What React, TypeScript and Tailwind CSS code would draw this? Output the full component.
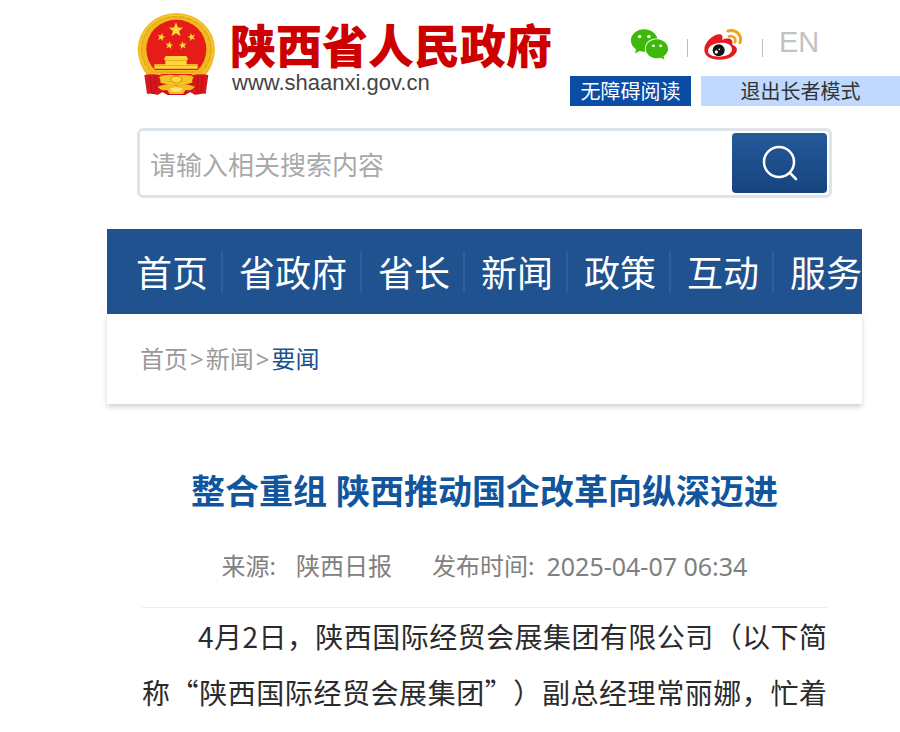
import { FaWeixin } from "react-icons/fa";

const navItems = ["首页", "省政府", "省长", "新闻", "政策", "互动", "服务"];

function Emblem() {
  const star = "M0,-10 L2.5,-3.2 L9.5,-3 L4,1.3 L6,8.2 L0,4.2 L-6,8.2 L-4,1.3 L-9.5,-3 L-2.5,-3.2 Z";
  return (
    <svg viewBox="20 22 237 252" className="h-[84px] w-[79px] shrink-0" aria-hidden="true">
      <path d="M48 200 L52 266 L82 270 L96 262 L112 271 L164 271 L180 262 L196 270 L223 266 L228 200 Z" fill="#c8141c" />
      <ellipse cx="138" cy="134" rx="116" ry="109" fill="#f0b91f" />
      <path d="M24 134 C24 175 40 210 70 226 H206 C236 210 252 175 252 134 Z" fill="#f0b91f" />
      <ellipse cx="138" cy="134" rx="104" ry="98" fill="none" stroke="#e0a018" strokeWidth="3" strokeDasharray="16 6" />
      <ellipse cx="138" cy="134" rx="110" ry="103" fill="none" stroke="#f9cf3c" strokeWidth="3" />
      <ellipse cx="138" cy="134" rx="90" ry="89" fill="#e51c18" />
      <g fill="#ffd83a">
        <path d={star} transform="translate(137 76) scale(2.3)" />
        <path d={star} transform="translate(93 97) rotate(15) scale(1.25)" />
        <path d={star} transform="translate(184 97) rotate(-15) scale(1.25)" />
        <path d={star} transform="translate(117 122) rotate(8) scale(1.25)" />
        <path d={star} transform="translate(157 122) rotate(-8) scale(1.25)" />
        <path d="M106 154 H168 L174 166 H169 V179 H202 V192 H72 V179 H105 V166 H100 Z" />
        <path d="M56 196 H219 V208 H56 Z" fill="#f7bd20" />
      </g>
      <path d="M105 167 H170 M72 183 H202 M58 202 H216" stroke="#dc8f12" strokeWidth="2" />
      <path d="M42 211 Q68 206 96 213 L88 235 L96 262 L82 270 L70 262 L50 268 Z" fill="#d6181d" />
      <path d="M234 211 Q208 206 180 213 L188 235 L180 262 L194 270 L206 262 L226 268 Z" fill="#d6181d" />
      <path d="M58 214 L64 260 M74 214 L76 262 M218 214 L212 260 M202 214 L200 262" stroke="#b01118" strokeWidth="3" fill="none" />
      <path d="M86 217 Q112 206 138 213 Q164 206 190 217 L180 236 Q160 226 138 230 Q116 226 96 236 Z" fill="#f7c324" />
      <path d="M120 222 Q138 206 156 222 Q150 236 138 236 Q126 236 120 222 Z" fill="#ffd83a" stroke="#dc8f12" strokeWidth="3" />
      <path d="M82 246 Q112 232 138 244 Q164 232 194 246 Q182 260 166 256 L158 268 H118 L110 256 Q94 260 82 246 Z" fill="#f6bb20" />
      <path d="M118 252 Q138 243 158 252 L150 261 H126 Z" fill="#ffe27a" />
    </svg>
  );
}

function WeiboIcon() {
  return (
    <svg viewBox="0 0 114 93" className="h-[31px] w-[38px]" aria-hidden="true">
      <path d="M1 62 C1 40 28 15 47 16 C57 17 57 26 54 33 C68 26 87 27 85 42 C84 46 84 46 88 49 C98 53 101 61 97 70 C88 86 67 92 46 92 C20 92 1 81 1 62 Z" fill="#e6191f" />
      <path d="M12 66 C12 51 30 42 50 41 C70 40 84 48 84 61 C84 75 67 83 46 83 C27 83 12 78 12 66 Z" fill="#fff" />
      <circle cx="44" cy="64" r="18" fill="#111" />
      <circle cx="37" cy="69" r="5" fill="#fff" />
      <circle cx="46" cy="61" r="2.5" fill="#fff" />
      <path d="M72 6 C96 -1 115 18 108 41" fill="none" stroke="#f6a21b" strokeWidth="9" strokeLinecap="round" />
      <path d="M75 22 C88 19 97 28 93 40" fill="none" stroke="#f6a21b" strokeWidth="8" strokeLinecap="round" />
    </svg>
  );
}

function Header() {
  return (
    <header className="flex justify-between pt-3 pl-[137px]">
      <a href="#" className="flex gap-3.5">
        <Emblem />
        <span className="flex flex-col pt-2">
          <span className="text-[46px] leading-[50px] font-black whitespace-nowrap text-[#cc0000]">
            陕西省人民政府
          </span>
          <span className="pt-px pl-0.5 font-['Liberation_Sans',sans-serif] text-[22px] leading-6 text-[#444]">
            www.shaanxi.gov.cn
          </span>
        </span>
      </a>
      <div className="flex w-[330px] shrink-0 flex-col justify-between">
        <div className="flex h-16 items-center gap-4 pl-[60px]">
          <a href="#" aria-label="微信">
            <FaWeixin className="size-[39px] text-[#3eb80b]" />
          </a>
          <span className="mt-2 ml-0.5 h-[18px] w-px bg-[#bbb]" />
          <a href="#" aria-label="微博">
            <WeiboIcon />
          </a>
          <span className="mt-2 ml-1 h-[18px] w-px bg-[#bbb]" />
          <a href="#" className="pb-1 font-['Liberation_Sans',sans-serif] text-[29px] leading-8 text-[#c2c2c2]">
            EN
          </a>
        </div>
        <div className="flex gap-2.5 text-xl leading-7">
          <button type="button" className="w-[121px] bg-[#0b4ca5] pt-0.5 text-white">
            无障碍阅读
          </button>
          <button type="button" className="grow bg-[#bfd9ff] pt-0.5 text-[#333]">
            退出长者模式
          </button>
        </div>
      </div>
    </header>
  );
}

function SearchBar() {
  return (
    <form
      className="mt-[22px] mr-[68px] ml-[137px] flex h-[70px] items-center rounded-md border-[3px] border-[#dde4ea] pr-0.5 pl-2.5"
      onSubmit={(e) => e.preventDefault()}
    >
      <input
        type="text"
        aria-label="搜索"
        placeholder="请输入相关搜索内容"
        className="h-full min-w-0 grow pt-1 text-[26px] outline-none placeholder:text-[#a9a9a9]"
      />
      <button
        type="submit"
        aria-label="搜索"
        className="flex h-[60px] w-[95px] shrink-0 items-center justify-center rounded bg-linear-to-b from-[#24599b] to-[#17447e]"
      >
        <svg viewBox="0 0 36 36" className="size-9" fill="none" stroke="#fff" strokeWidth="2.5" strokeLinecap="round">
          <circle cx="17" cy="17" r="15" />
          <path d="M28 28 L34 34" />
        </svg>
      </button>
    </form>
  );
}

export default function App() {
  return (
    <div
      lang="zh-CN"
      className="min-h-screen overflow-hidden bg-white font-['Noto_Sans','Noto_Sans_CJK_SC',sans-serif]"
    >
      <Header />
      <SearchBar />
      <div className="mt-[31px] mr-[38px] ml-[107px]">
        <nav className="overflow-hidden bg-[#20528f] pl-[13px]">
          <ul className="flex h-[85px] items-center">
            {navItems.map((item, i) => (
              <li
                key={item}
                className={`flex h-[42px] shrink-0 items-center pr-[13px] pl-4 ${i > 0 ? "border-l-2 border-[#2c5f9b]" : ""}`}
              >
                <a href="#" className="pt-1 text-4xl text-white">
                  {item}
                </a>
              </li>
            ))}
          </ul>
        </nav>
        <div className="flex h-[90px] items-center gap-0.5 px-[33px] text-2xl text-[#999] shadow-[0_3px_5px_rgba(0,0,0,0.18)]">
          <a href="#">首页</a>
          <span>&gt;</span>
          <a href="#">新闻</a>
          <span>&gt;</span>
          <a href="#" className="text-[#20528f]">
            要闻
          </a>
        </div>

        <article className="px-[35px] pt-[62px]">
          <h1 className="text-center text-[34px] leading-[50px] font-bold text-[#11559c]">
            整合重组 陕西推动国企改革向纵深迈进
          </h1>
          <div className="flex justify-center gap-10 border-b border-[#eee] pt-[30px] pb-[21px] text-2xl leading-10 text-[#808080]">
            <p className="flex gap-5">
              <span>来源:</span>
              <span>陕西日报</span>
            </p>
            <p className="flex gap-3">
              <span>发布时间:</span>
              <time className="text-[25px]">2025-04-07 06:34</time>
            </p>
          </div>
          <p className="text-justify indent-14 font-['Noto_Sans_CJK_SC',sans-serif] text-[28px] leading-14 text-[#2b2b2b] [text-align-last:justify] [text-spacing-trim:space-all]">
            4月2日，陕西国际经贸会展集团有限公司（以下简称“陕西国际经贸会展集团”）副总经理常丽娜，忙着
          </p>
        </article>
      </div>
    </div>
  );
}
